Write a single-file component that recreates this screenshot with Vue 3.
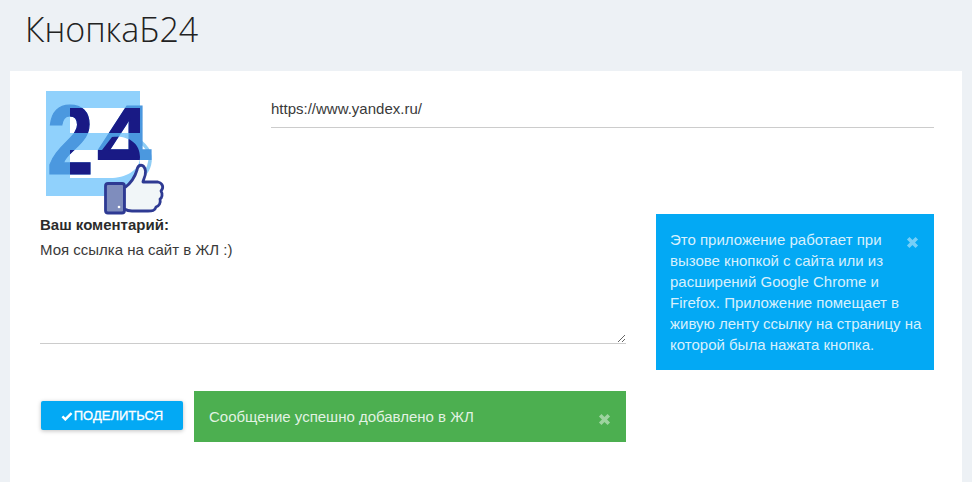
<script setup>
const url = 'https://www.yandex.ru/'
const comment = 'Моя ссылка на сайт в ЖЛ :)'
</script>

<template>
  <div class="page">
    <h1 class="title">КнопкаБ24</h1>
    <main class="card">
      <section class="top">
        <svg class="logo" viewBox="0 0 125 125" role="img" aria-label="логотип">
          <defs>
            <clipPath id="plate">
              <rect x="30" y="17" width="70" height="25" />
              <path d="M30 59 H62 L72 46 C88 44 100 52 100 66 C100 80 85 87 70 87 H30 Z" />
            </clipPath>
            <clipPath id="four-cut">
              <rect x="40" y="0" width="80" height="69" />
            </clipPath>
          </defs>
          <rect x="6" y="0" width="94" height="105" fill="#90d1fc" />
          <rect x="30" y="17" width="70" height="25" fill="#fff" />
          <path d="M30 59 H62 L72 46 C88 44 100 52 100 66 C100 80 85 87 70 87 H30 Z" fill="#fff" />
          <path d="M85 45 C102 48 111 58 110 70 C109 80 103 86 95 90" fill="none" stroke="#8fcdf5" stroke-width="3.5" />
          <text class="digits mid" transform="translate(7 83) scale(.85 1)">2</text>
          <g clip-path="url(#four-cut)"><text x="57" y="83" class="digits mid">4</text></g>
          <g clip-path="url(#plate)">
            <text class="digits dark" transform="translate(7 83) scale(.85 1)">2</text>
            <g clip-path="url(#four-cut)"><text x="57" y="83" class="digits dark">4</text></g>
          </g>
          <g stroke="#2e3a93" stroke-width="2.8" stroke-linejoin="round">
            <rect x="65.5" y="92.5" width="19" height="29.5" rx="2.5" fill="#7f8dbd" />
            <path d="M84.5 97 C91 92 95 86 97 79 C98 73 104 72 105.5 80 C106 85 103 89 103 91 L118 91 C123 92 124 97 121 100 C123 103 122 107 120 108 C121 112 119 115 116 116 C115 120 112 120 108 120 L92 120 C88 120 86 119 84.5 118 Z" fill="#f1f6f8" />
          </g>
          <circle cx="79" cy="116" r="1.3" fill="#fff" />
        </svg>
        <input class="url" :value="url" readonly />
      </section>
      <section class="middle">
        <div class="form">
          <label class="label" for="comment">Ваш коментарий:</label>
          <textarea id="comment" class="comment" :value="comment" readonly></textarea>
          <div class="actions">
            <button class="share" type="button">
              <svg class="check" viewBox="0 0 14 12"><path d="M1.5 6.5 L5 10 L12.5 2.5" fill="none" stroke="#fff" stroke-width="3" /></svg>ПОДЕЛИТЬСЯ
            </button>
            <div class="alert success">
              <span>Сообщение успешно добавлено в ЖЛ</span>
              <svg class="close" viewBox="0 0 13 13"><path d="M2.2 2.2 L10.8 10.8 M10.8 2.2 L2.2 10.8" stroke="#fff" stroke-width="3.6" /></svg>
            </div>
          </div>
        </div>
        <aside class="alert info">
          <span>Это приложение работает при вызове кнопкой с сайта или из расширений Google Chrome и Firefox. Приложение помещает в живую ленту ссылку на страницу на которой была нажата кнопка.</span>
          <svg class="close" viewBox="0 0 13 13"><path d="M2.2 2.2 L10.8 10.8 M10.8 2.2 L2.2 10.8" stroke="#fff" stroke-width="3.6" /></svg>
        </aside>
      </section>
    </main>
  </div>
</template>

<style scoped>
.page {
  height: 482px;
  overflow: hidden;
  background: #edf1f5;
  font-family: "Liberation Sans", Arial, sans-serif;
  color: #333;
  box-sizing: border-box;
  padding: 0 10px;
}
.title {
  margin: 0;
  height: 71px;
  padding: 7px 0 0 15px;
  box-sizing: border-box;
  font-family: "Open Sans", sans-serif;
  font-weight: 300;
  font-size: 34px;
  line-height: 44px;
  color: #222;
}
.card {
  background: #fff;
  height: 411px;
  padding: 0 28px 0 30px;
}
.top {
  display: flex;
  height: 143px;
  padding-top: 20px;
  box-sizing: border-box;
}
.logo {
  width: 125px;
  height: 125px;
  margin-right: 106px;
  flex: none;
}
.digits {
  font-family: "Liberation Sans", sans-serif;
  font-weight: 700;
  font-size: 98px;
  stroke-width: 1.2px;
}
.dark { fill: #191a85; stroke: #191a85; }
.mid { fill: #4b98df; stroke: #4b98df; }
.url {
  flex: 1;
  height: 37px;
  box-sizing: border-box;
  border: 0;
  border-bottom: 1px solid #ccc;
  padding: 0 0 2px;
  font: 15px "Liberation Sans", sans-serif;
  color: #3a3a3a;
  outline: none;
}
.middle {
  display: flex;
  justify-content: space-between;
  align-items: flex-start;
}
.form { width: 586px; }
.label {
  display: block;
  margin-top: 1px;
  font-size: 15px;
  font-weight: 700;
  line-height: 20px;
  color: #2b2b2b;
}
.comment {
  display: block;
  width: 100%;
  height: 109px;
  box-sizing: border-box;
  border: 0;
  border-bottom: 1px solid #ccc;
  padding: 5px 0 0;
  font: 15px/20px "Liberation Sans", sans-serif;
  color: #3a3a3a;
  outline: none;
}
.actions {
  display: flex;
  align-items: flex-start;
  margin-top: 47px;
  padding-left: 1px;
  gap: 11px;
}
.share {
  display: flex;
  align-items: center;
  justify-content: center;
  width: 142px;
  height: 29px;
  margin-top: 10px;
  border: 0;
  border-radius: 2px;
  background: #03a9f4;
  color: #fff;
  font: 13px "Liberation Sans", sans-serif;
  -webkit-text-stroke: .3px #fff;
  box-shadow: 0 1px 4px rgba(0, 0, 0, .25);
  padding: 0;
}
.check { width: 12px; height: 10px; margin-right: 1px; }
.alert {
  position: relative;
  color: rgba(255, 255, 255, .85);
  font-size: 15px;
  line-height: 21px;
  box-sizing: border-box;
}
.close {
  position: absolute;
  width: 13px;
  height: 13px;
  opacity: .45;
}
.success {
  flex: 1;
  height: 51px;
  background: #4caf50;
  padding: 15px;
}
.success .close { right: 15px; top: 22px; }
.info {
  width: 278px;
  height: 156px;
  background: #03a9f4;
  padding: 15px 10px 15px 14px;
}
.info .close { right: 15px; top: 22px; }
</style>

<style>
html, body { margin: 0; }
</style>
